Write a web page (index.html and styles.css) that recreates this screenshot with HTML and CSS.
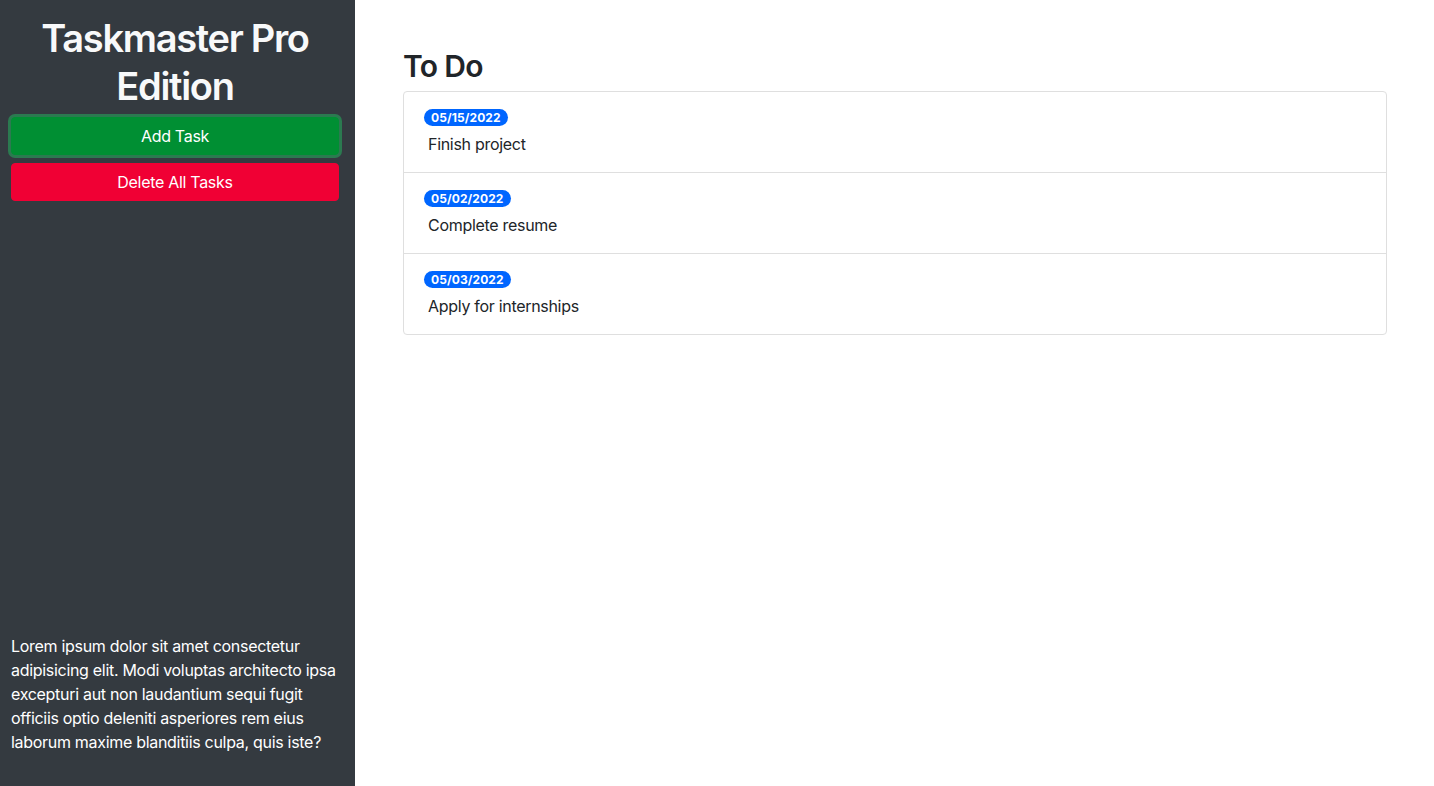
FILE: index.html
```html
<!DOCTYPE html>
<html lang="en">
<head>
<meta charset="utf-8">
<title>Taskmaster Pro</title>
<link rel="stylesheet" href="styles.css">
</head>
<body>
<div class="app">
  <aside class="sidebar">
    <div class="sidebar-top">
      <h1 class="brand">Taskmaster Pro Edition</h1>
      <button class="btn btn-success btn-focus">Add Task</button>
      <button class="btn btn-danger">Delete All Tasks</button>
    </div>
    <p class="blurb">Lorem ipsum dolor sit amet consectetur adipisicing elit. Modi voluptas architecto ipsa excepturi aut non laudantium sequi fugit officiis optio deleniti asperiores rem eius laborum maxime blanditiis culpa, quis iste?</p>
  </aside>
  <main class="main">
    <h2 class="list-title">To Do</h2>
    <ul class="list-group">
      <li class="list-item">
        <span class="badge">05/15/2022</span>
        <p class="task-text">Finish project</p>
      </li>
      <li class="list-item">
        <span class="badge">05/02/2022</span>
        <p class="task-text">Complete resume</p>
      </li>
      <li class="list-item">
        <span class="badge">05/03/2022</span>
        <p class="task-text">Apply for internships</p>
      </li>
    </ul>
  </main>
</div>
</body>
</html>
```

FILE: styles.css
```css
* { box-sizing: border-box; }

html, body {
  margin: 0;
  padding: 0;
  height: 100%;
}

body {
  font-family: Inter, "Noto Sans", "Liberation Sans", sans-serif;
  font-size: 16px;
  line-height: 24px;
  letter-spacing: -0.3px;
  color: #212529;
  background: #fff;
}

.app {
  display: flex;
  height: 100vh;
}

.sidebar {
  width: 355px;
  flex: 0 0 355px;
  background: #343a40;
  color: #fff;
  display: flex;
  flex-direction: column;
  justify-content: space-between;
  padding: 14px 16px 16px 11px;
}

.sidebar-top {
  display: flex;
  flex-direction: column;
  gap: 8px;
}

.brand {
  margin: 0 0 -1px 0;
  font-size: 38px;
  line-height: 48px;
  font-weight: 600;
  text-align: center;
  letter-spacing: -1.3px;
  color: #f8f9fa;
}

.btn {
  display: block;
  width: 100%;
  height: 38px;
  border: 1px solid transparent;
  border-radius: 4px;
  font-family: inherit;
  font-size: 16px;
  line-height: 24px;
  letter-spacing: -0.3px;
  color: #fff;
  cursor: pointer;
  padding: 6px 12px;
}

.btn-success {
  background: #008f33;
  border-color: #008f33;
}

.btn-focus {
  box-shadow: 0 0 0 3px #2b7a50;
}

.btn-danger {
  background: #f00034;
  border-color: #f00034;
}

.blurb {
  margin: 0 0 16px 0;
  font-size: 16px;
  line-height: 24px;
  color: #fff;
}

.main {
  flex: 1;
  padding: 47px 47px 48px 48px;
}

.list-title {
  margin: 0 0 6px 0;
  font-size: 30px;
  line-height: 38px;
  font-weight: 600;
  letter-spacing: -0.7px;
}

.list-group {
  list-style: none;
  margin: 0;
  padding: 0;
  border: 1px solid #dfdfdf;
  border-radius: 4px;
}

.list-item {
  display: flex;
  flex-direction: column;
  align-items: flex-start;
  padding: 17px 20px 16px 20px;
  border-top: 1px solid #dfdfdf;
}

.list-item:first-child {
  border-top: 0;
}

.badge {
  display: block;
  height: 17px;
  padding: 0 7px;
  border-radius: 9px;
  background: #0066ff;
  color: #fff;
  font-size: 12px;
  line-height: 17px;
  font-weight: 700;
  letter-spacing: 0.1px;
}

.task-text {
  margin: 6px 0 0 4px;
  font-size: 16px;
  line-height: 24px;
  color: #212529;
}
```
